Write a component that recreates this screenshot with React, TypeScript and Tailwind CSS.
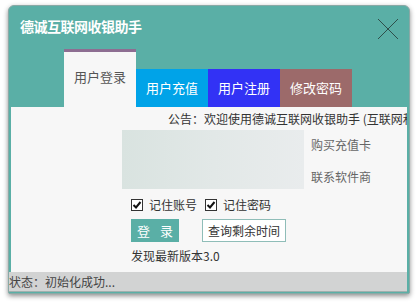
import React from "react";

const font = { fontFamily: '"Noto Sans CJK SC", "Noto Sans", sans-serif' };

function Check({ label }: { label: string }) {
  return (
    <label className="flex items-center gap-[6px]">
      <span className="w-[12px] h-[12px] border border-[#333] bg-white flex items-center justify-center">
        <svg width="10" height="10" viewBox="0 0 10 10">
          <path d="M1.5 5 L4 7.5 L8.5 2" fill="none" stroke="#111" strokeWidth="2" />
        </svg>
      </span>
      <span className="text-[12px] text-[#333] leading-none">{label}</span>
    </label>
  );
}

export default function App() {
  const tabs = [
    { name: "用户充值", bg: "bg-[#00a3e8]" },
    { name: "用户注册", bg: "bg-[#3232f5]" },
    { name: "修改密码", bg: "bg-[#9c6a6a]" },
  ];

  return (
    <div className="w-[417px] h-[304px] bg-white pt-[5px] pl-[8px]" style={font}>
      <div className="w-[402px] h-[289px] rounded-t-[6px] rounded-b-[2px] bg-[#5aafa6] border border-[#8aa9a6] shadow-[0_2px_5px_rgba(0,0,0,0.45)] flex flex-col overflow-hidden">
        {/* title bar */}
        <div className="h-[42px] flex items-start justify-between pl-[11px] pr-[10px] pt-[11px]">
          <span className="text-white font-bold text-[14px] leading-[18px] tracking-[-0.5px]">
            德诚互联网收银助手
          </span>
          <svg width="22" height="22" viewBox="0 0 22 22" className="mt-[1px]">
            <path d="M1 1 L21 21 M21 1 L1 21" stroke="#2e4f4b" strokeWidth="1" />
          </svg>
        </div>

        {/* tabs */}
        <div className="h-[59px] flex items-end pl-[55px]">
          <div className="w-[72px] h-[58px] bg-[#f7f7f7] border-t-[3px] border-[#8e6e92] flex justify-center pt-[15px] text-[13px] text-[#555]">
            用户登录
          </div>
          {tabs.map((t) => (
            <div
              key={t.name}
              className={`w-[72px] h-[38px] ${t.bg} flex items-center justify-center text-[13px] text-white`}
            >
              {t.name}
            </div>
          ))}
        </div>

        {/* body */}
        <div className="flex-1 mx-[2px] mb-[1px] flex flex-col bg-[#f7f7f7]">
          <div className="flex-1 flex flex-col overflow-hidden">
            <div className="pl-[157px] pt-[4px] whitespace-nowrap overflow-hidden text-[12px] leading-[16px] text-[#333]">
              公告：欢迎使用德诚互联网收银助手 (互联网和收银一体化)
            </div>
            <div className="flex mt-[3px] pl-[111px]">
              <div className="w-[182px] h-[59px] bg-gradient-to-r from-[#d9e3e0] via-[#e2e8e7] to-[#e9eced] blur-[0.5px]" />
              <div className="ml-[7px] flex flex-col text-[12px] text-[#666] leading-[16px] pt-[7px] gap-[16px]">
                <span>购买充值卡</span>
                <span>联系软件商</span>
              </div>
            </div>
            <div className="flex items-center gap-[8px] pl-[120px] mt-[10px]">
              <Check label="记住账号" />
              <Check label="记住密码" />
            </div>
            <div className="flex items-center pl-[120px] mt-[8px] gap-[23px]">
              <button className="w-[48px] h-[23px] bg-[#5aafa6] text-white text-[13px] flex items-center justify-center gap-[10px]">
                <span>登</span>
                <span>录</span>
              </button>
              <button className="w-[84px] h-[23px] bg-white border border-[#8fbdb8] text-[12px] text-[#333]">
                查询剩余时间
              </button>
            </div>
            <div className="pl-[120px] mt-[6px] text-[12px] leading-[16px] text-[#333]">
              发现最新版本3.0
            </div>
          </div>
          <div className="h-[20px] bg-[#d2d3d3] border-b border-[#9fb0ae] flex items-center text-[12px] text-[#444] -ml-[2px]">
            状态：初始化成功...
          </div>
        </div>
      </div>
    </div>
  );
}
